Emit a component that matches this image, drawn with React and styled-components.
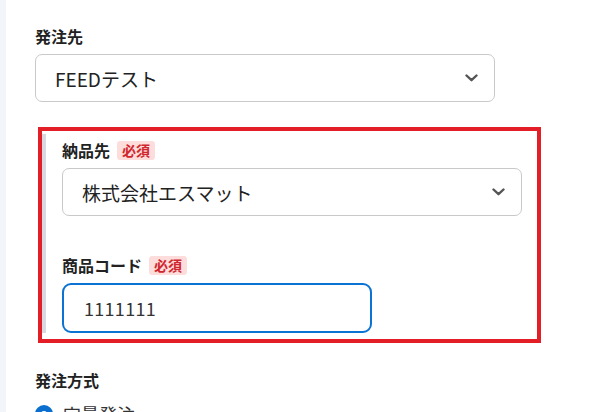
import React from "react";
import styled, { createGlobalStyle } from "styled-components";

const GlobalStyle = createGlobalStyle`
  body {
    margin: 0;
    background: #ffffff;
    font-family: "Noto Sans CJK JP", "Noto Sans", sans-serif;
    color: #222;
  }
`;

const Page = styled.div`
  display: flex;
  height: 412px;
  overflow: hidden;
`;

const SideStrip = styled.div`
  width: 6px;
  flex-shrink: 0;
  background: #f2f5fa;
`;

const Main = styled.div`
  flex: 1;
  padding: 24px 0 0 29px;
  display: flex;
  flex-direction: column;
`;

const Field = styled.div`
  display: flex;
  flex-direction: column;
  gap: 6px;
  margin-top: ${(props) => props.top || 0}px;
`;

const LabelRow = styled.div`
  display: flex;
  align-items: center;
  gap: 7px;
  height: 24px;
`;

const Label = styled.span`
  font-size: 16px;
  font-weight: 700;
  line-height: 24px;
  color: #222;
`;

const Badge = styled.span`
  display: inline-flex;
  align-items: center;
  height: 19px;
  padding: 0 5px;
  border-radius: 3px;
  background: #fddcdc;
  color: #d0262d;
  font-size: 14px;
  font-weight: 700;
`;

const SelectBox = styled.div`
  box-sizing: border-box;
  width: ${(props) => props.width}px;
  height: 48px;
  border: 1px solid #c9c9c9;
  border-radius: 7px;
  display: flex;
  align-items: center;
  justify-content: space-between;
  padding: 0 16px 0 19px;
  font-size: 19px;
  color: #222;
`;

const TextInput = styled.div`
  box-sizing: border-box;
  width: 310px;
  height: 50px;
  border: 2px solid #0b73d4;
  border-radius: 9px;
  display: flex;
  align-items: center;
  padding: 0 20px;
  font-size: 18px;
  color: #333;
  letter-spacing: 0.3px;
`;

const Highlight = styled.div`
  box-sizing: border-box;
  width: 503px;
  margin-top: 25px;
  margin-left: 3px;
  border: 4px solid #e41e26;
  padding: 3px 14px 6px 0;
`;

const Section = styled.div`
  border-left: 4px solid #d6d9df;
  padding: 4px 0 0 16px;
  display: flex;
  flex-direction: column;
`;

const RadioRow = styled.div`
  display: flex;
  align-items: center;
  gap: 10px;
  margin-top: 3px;
`;

const RadioDot = styled.span`
  box-sizing: border-box;
  width: 18px;
  height: 18px;
  border-radius: 50%;
  border: 6px solid #0b6fd0;
  background: #fff;
`;

const RadioText = styled.span`
  font-size: 18px;
  color: #333;
`;

const Chevron = () => (
  <svg width="13" height="8" viewBox="0 0 13 8">
    <path d="M1.5 1.5 L6.5 6.2 L11.5 1.5" fill="none" stroke="#555" strokeWidth="2.4" strokeLinecap="round" strokeLinejoin="round" />
  </svg>
);

export default function App() {
  return (
    <>
      <GlobalStyle />
      <Page>
        <SideStrip />
        <Main>
          <Field>
            <LabelRow>
              <Label>発注先</Label>
            </LabelRow>
            <SelectBox width={460}>
              <span>FEEDテスト</span>
              <Chevron />
            </SelectBox>
          </Field>

          <Highlight>
            <Section>
              <Field>
                <LabelRow>
                  <Label>納品先</Label>
                  <Badge>必須</Badge>
                </LabelRow>
                <SelectBox width={460}>
                  <span>株式会社エスマット</span>
                  <Chevron />
                </SelectBox>
              </Field>
              <Field top={37}>
                <LabelRow>
                  <Label>商品コード</Label>
                  <Badge>必須</Badge>
                </LabelRow>
                <TextInput>1111111</TextInput>
              </Field>
            </Section>
          </Highlight>

          <Field top={25}>
            <LabelRow>
              <Label>発注方式</Label>
            </LabelRow>
            <RadioRow>
              <RadioDot />
              <RadioText>定量発注</RadioText>
            </RadioRow>
          </Field>
        </Main>
      </Page>
    </>
  );
}
